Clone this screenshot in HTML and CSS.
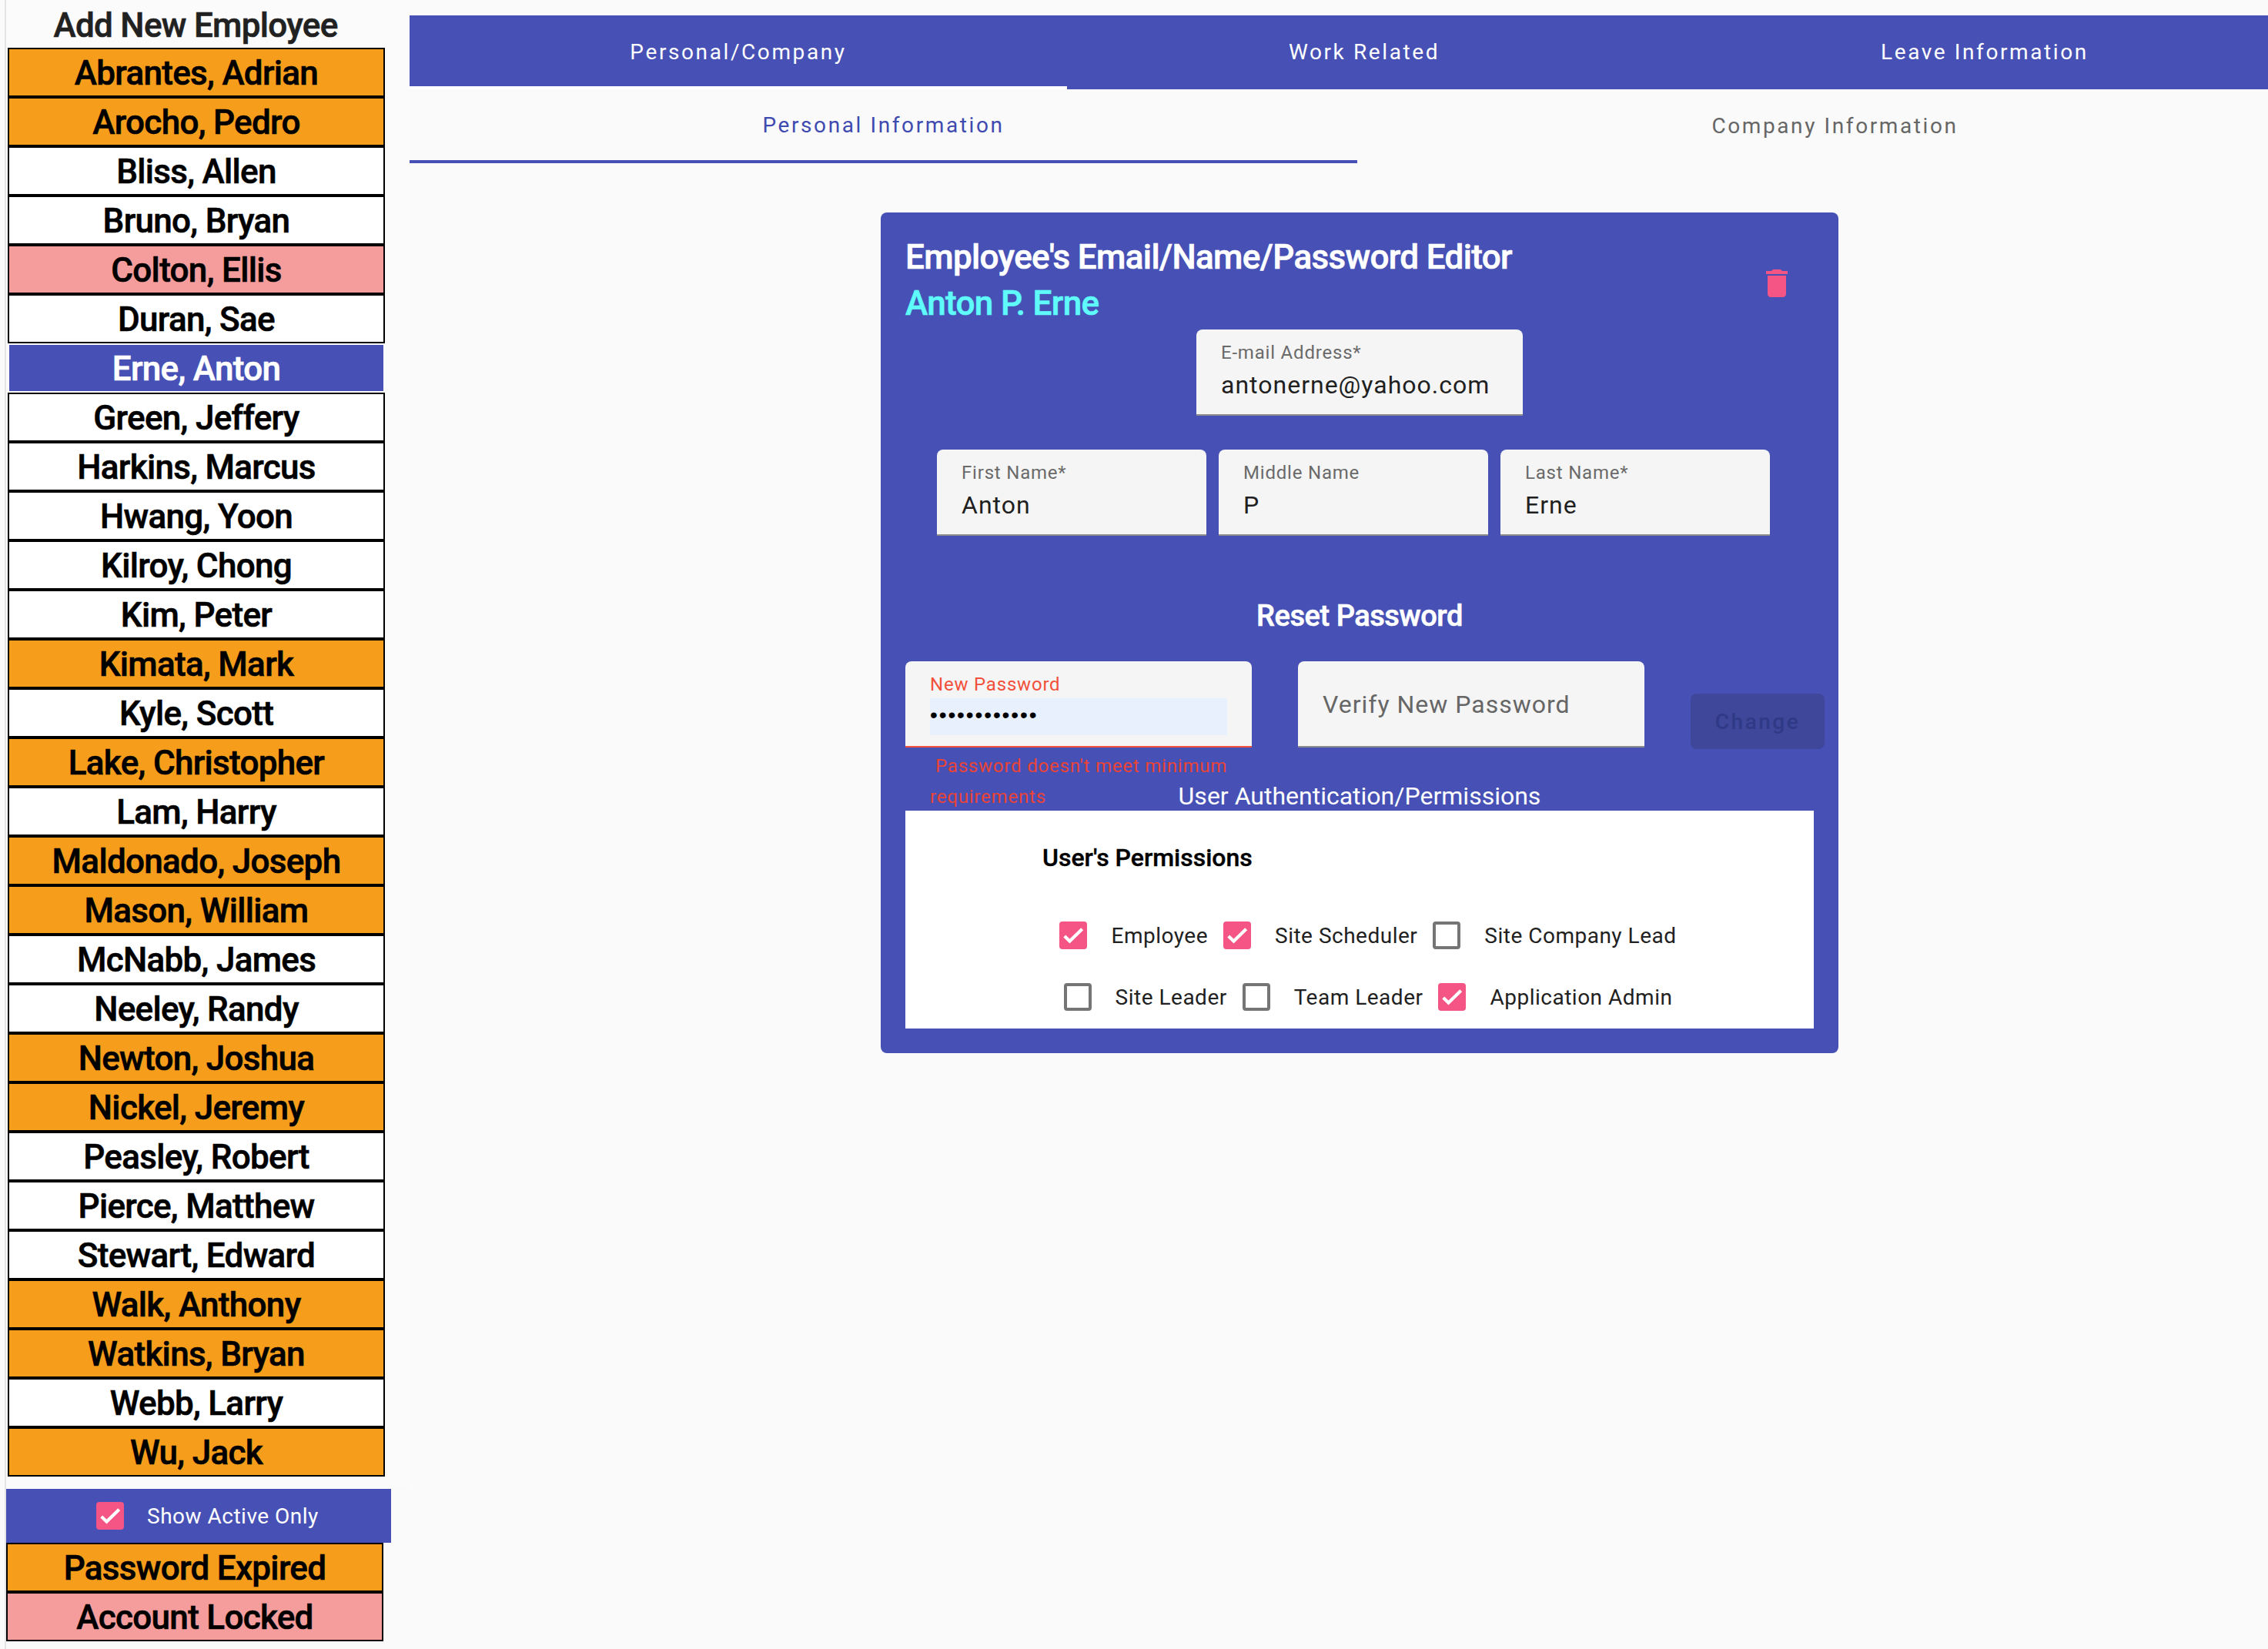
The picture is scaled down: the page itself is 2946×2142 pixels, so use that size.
FILE: index.html
```html
<!DOCTYPE html>
<html lang="en">
<head>
<meta charset="utf-8">
<title>Employee Editor</title>
<link rel="stylesheet" href="styles.css">
</head>
<body>
<div class="page">
  <aside class="sidebar">
    <div class="panel">
      <div class="add-new">Add New Employee</div>
      <div class="emp expired">Abrantes, Adrian</div>
      <div class="emp expired">Arocho, Pedro</div>
      <div class="emp">Bliss, Allen</div>
      <div class="emp">Bruno, Bryan</div>
      <div class="emp locked">Colton, Ellis</div>
      <div class="emp">Duran, Sae</div>
      <div class="emp selected">Erne, Anton</div>
      <div class="emp">Green, Jeffery</div>
      <div class="emp">Harkins, Marcus</div>
      <div class="emp">Hwang, Yoon</div>
      <div class="emp">Kilroy, Chong</div>
      <div class="emp">Kim, Peter</div>
      <div class="emp expired">Kimata, Mark</div>
      <div class="emp">Kyle, Scott</div>
      <div class="emp expired">Lake, Christopher</div>
      <div class="emp">Lam, Harry</div>
      <div class="emp expired">Maldonado, Joseph</div>
      <div class="emp expired">Mason, William</div>
      <div class="emp">McNabb, James</div>
      <div class="emp">Neeley, Randy</div>
      <div class="emp expired">Newton, Joshua</div>
      <div class="emp expired">Nickel, Jeremy</div>
      <div class="emp">Peasley, Robert</div>
      <div class="emp">Pierce, Matthew</div>
      <div class="emp">Stewart, Edward</div>
      <div class="emp expired">Walk, Anthony</div>
      <div class="emp expired">Watkins, Bryan</div>
      <div class="emp">Webb, Larry</div>
      <div class="emp expired">Wu, Jack</div>
    </div>
    <div class="active-bar">
      <span class="cb on"><svg viewBox="0 0 24 24"><path d="M4.500 12.700 9 17 19.800 6.500"/></svg></span>
      <span class="active-label">Show Active Only</span>
    </div>
    <div class="legend expired">Password Expired</div>
    <div class="legend locked">Account Locked</div>
  </aside>
  <main class="main">
    <nav class="tabs">
      <div class="tab tab-a active">Personal/Company</div>
      <div class="tab tab-b">Work Related</div>
      <div class="tab tab-c">Leave Information</div>
    </nav>
    <nav class="subtabs">
      <div class="subtab active">Personal Information</div>
      <div class="subtab">Company Information</div>
    </nav>
    <section class="card">
      <header class="card-head">
        <div>
          <h1 class="title">Employee's Email/Name/Password Editor</h1>
          <h2 class="person">Anton P. Erne</h2>
        </div>
        <svg class="trash" viewBox="0 0 24 24"><path d="M6 19c0 1.100.9 2 2 2h8c1.100 0 2-.9 2-2V7H6v12zM19 4h-3.500l-1-1h-5l-1 1H5v2h14V4z"/></svg>
      </header>
      <div class="field email-field">
        <span class="label">E-mail Address*</span>
        <span class="value">antonerne@yahoo.com</span>
      </div>
      <div class="name-row">
        <div class="field"><span class="label">First Name*</span><span class="value">Anton</span></div>
        <div class="field"><span class="label">Middle Name</span><span class="value">P</span></div>
        <div class="field"><span class="label">Last Name*</span><span class="value">Erne</span></div>
      </div>
      <h3 class="reset">Reset Password</h3>
      <div class="pass-row">
        <div class="field pass invalid">
          <span class="label">New Password</span>
          <span class="autofill">••••••••••••</span>
          <div class="error"><span class="error-first">Password doesn't meet minimum</span><br>requirements</div>
        </div>
        <div class="field pass">
          <span class="placeholder">Verify New Password</span>
        </div>
        <div class="change">Change</div>
      </div>
      <h3 class="auth">User Authentication/Permissions</h3>
      <div class="perm-panel">
        <h4 class="perm-title">User's Permissions</h4>
        <div class="perm-row">
          <span class="cb on"><svg viewBox="0 0 24 24"><path d="M4.500 12.700 9 17 19.800 6.500"/></svg></span><span class="perm-label">Employee</span>
          <span class="cb on"><svg viewBox="0 0 24 24"><path d="M4.500 12.700 9 17 19.800 6.500"/></svg></span><span class="perm-label">Site Scheduler</span>
          <span class="cb"></span><span class="perm-label">Site Company Lead</span>
        </div>
        <div class="perm-row">
          <span class="cb"></span><span class="perm-label">Site Leader</span>
          <span class="cb"></span><span class="perm-label">Team Leader</span>
          <span class="cb on"><svg viewBox="0 0 24 24"><path d="M4.500 12.700 9 17 19.800 6.500"/></svg></span><span class="perm-label">Application Admin</span>
        </div>
      </div>
    </section>
  </main>
</div>
</body>
</html>
```
FILE: styles.css
```css
* { box-sizing: border-box; }
html, body { margin: 0; padding: 0; }
body {
  background: #fafafa;
  font-family: Roboto, "Liberation Sans", sans-serif;
  color: #000;
  overflow: hidden;
}
h1, h2, h3, h4 { margin: 0; font-weight: 500; }
.page { display: flex; width: 2998px; height: 2142px; }

.sidebar { flex: none; width: 526px; height: 2142px; margin-left: 6px; border-left: 2px solid #e4e4e4; }
.panel { background: #fbfbfb; padding-top: 2px; padding-left: 2px; height: 1932px; }
.add-new, .emp, .legend {
  text-align: center; font-size: 44px; line-height: 62px; font-weight: 500;
  letter-spacing: -0.7px; -webkit-text-stroke: 0.6px currentColor;
}
.add-new { height: 60px; width: 488px; color: #212121; }
.emp { width: 490px; height: 64px; border: 2px solid #000; background: #fff; color: #000; }
.expired { background-color: #f69e1b; }
.locked { background-color: #f59d9c; }
.emp.selected { border-color: transparent; background-color: #4751b5; background-clip: padding-box; color: #fff; }

.active-bar {
  width: 500px; height: 70px; margin-top: 2px; background: #4751b5;
  display: flex; align-items: center; padding-left: 117px; gap: 30px;
}
.active-label { color: #fff; font-size: 28px; letter-spacing: 0.5px; }
.legend { width: 490px; height: 64px; border: 2px solid #000; }

.cb { width: 36px; height: 36px; flex: none; border: 4px solid #757575; border-radius: 4px; display: block; }
.cb.on { background: #f45584; border: none; }
.cb svg { display: block; width: 36px; height: 36px; fill: none; stroke: #fff; stroke-width: 2.8; }

.main { width: 2466px; flex: none; padding-top: 20px; }
.tabs { display: flex; height: 96px; background: #4751b5; }
.tab {
  height: 96px; display: flex; align-items: center; justify-content: center;
  color: #fff; font-size: 28px; font-weight: 400; letter-spacing: 2.6px; padding-bottom: 2px;
}
.tab-a { width: 854px; }
.tab-b { width: 772px; }
.tab-c { width: 840px; }
.tab.active { border-bottom: 4px solid #fff; padding-top: 2px; padding-bottom: 0; }
.subtabs { display: flex; height: 96px; }
.subtab {
  flex: none; width: 1241px; display: flex; align-items: center; justify-content: center;
  color: #666; font-size: 28px; font-weight: 400; letter-spacing: 2.6px; padding-bottom: 2px;
}
.subtab.active { color: #3f4ab0; border-bottom: 4px solid #4751b5; padding-bottom: 0; width: 1231px; }

.card {
  width: 1244px; height: 1092px; margin: 64px 0 0 612px; padding: 28px 32px 32px;
  background: #4751b5; border-radius: 8px;
}
.card-head { display: flex; justify-content: space-between; height: 124px; }
.title, .person { font-size: 44px; line-height: 60px; letter-spacing: -0.65px; -webkit-text-stroke: 0.6px currentColor; }
.title { color: #fff; }
.person { color: #5ffbfb; }
.trash { width: 48px; height: 48px; margin-top: 40px; margin-right: 24px; fill: #f45584; }

.field {
  position: relative; width: 350px; height: 112px; background: #f5f5f5;
  border-radius: 8px 8px 0 0; border-bottom: 2px solid #8c8c8c;
  display: block; flex: none;
}
.email-field { width: 424px; margin-left: 378px; }
.label { position: absolute; left: 32px; top: 14px; font-size: 24px; line-height: 32px; color: #6a6a6a; letter-spacing: 0.8px; white-space: nowrap; }
.value { position: absolute; left: 32px; top: 50px; font-size: 32px; line-height: 44px; color: #1f1f1f; letter-spacing: 1px; white-space: nowrap; }
.name-row { display: flex; gap: 16px; margin-top: 44px; margin-left: 41px; }
.reset { font-size: 38px; line-height: 60px; letter-spacing: -0.45px; -webkit-text-stroke: 0.6px currentColor; color: #fff; text-align: center; margin-top: 74px; }
.pass-row { display: flex; height: 114px; margin-top: 29px; }
.pass { width: 450px; margin-right: 60px; }
.pass.invalid { border-bottom-color: #f2503a; }
.pass.invalid .label { color: #f2503a; }
.autofill {
  position: absolute; left: 32px; top: 48px; width: 386px; height: 48px;
  background: #e8f0fe; color: #000; font-size: 28px; line-height: 44px; letter-spacing: 1.9px; font-family: "Liberation Sans", sans-serif;
}
.placeholder { position: absolute; left: 32px; top: 34px; font-size: 32px; line-height: 44px; color: #666; letter-spacing: 1px; white-space: nowrap; }
.error { position: absolute; left: 32px; top: 116px; font-size: 24px; line-height: 40px; color: #ea4335; letter-spacing: 0.8px; white-space: nowrap; }
.error-first { margin-left: 7px; }
.change {
  width: 174px; height: 72px; flex: none; margin-top: 42px; border-radius: 8px; background: #3e4799;
  color: #2f3a87; font-size: 28px; font-weight: 500; letter-spacing: 2.5px;
  display: flex; align-items: center; justify-content: center;
}
.auth { font-size: 32px; font-weight: 400; line-height: 38px; color: #fff; text-align: center; margin-top: 42px; }
.perm-panel { background: #fff; height: 283px; padding-top: 41px; }
.perm-title { font-size: 32px; line-height: 40px; -webkit-text-stroke: 0.4px currentColor; margin-left: 178px; color: #000; }
.perm-row { display: flex; justify-content: center; align-items: center; height: 40px; padding-left: 22px; margin-top: 40px; }
.perm-title + .perm-row { margin-top: 61px; }
.perm-label { font-size: 28px; letter-spacing: 0.5px; color: #212121; margin: 0 20px 0 31px; white-space: nowrap; }
.perm-label:last-child { margin-right: 0; }
```
